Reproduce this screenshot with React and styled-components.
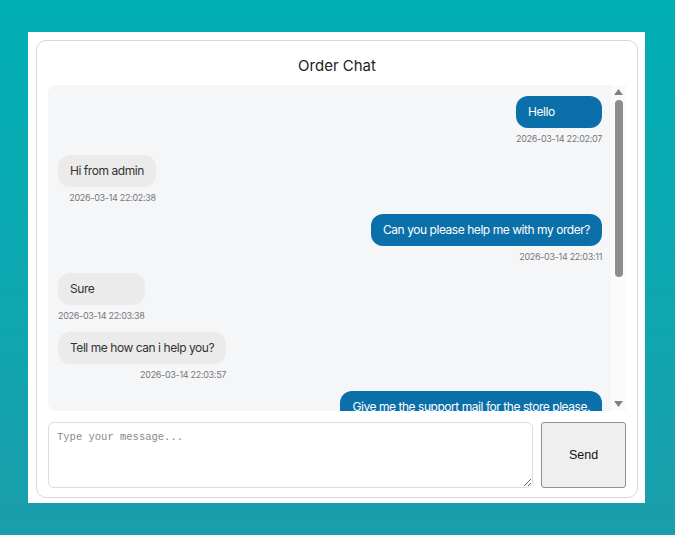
import React from 'react';
import styled, { createGlobalStyle } from 'styled-components';

const Global = createGlobalStyle`
  html, body {
    margin: 0;
    padding: 0;
  }
  body {
    min-height: 100vh;
    background: linear-gradient(180deg, #00afb4 0%, #0fa6b0 60%, #1a9eab 100%);
    font-family: 'Inter', 'Noto Sans', sans-serif;
  }
`;

const Page = styled.div`
  padding: 32px 30px 32px 28px;
`;

const Panel = styled.div`
  width: 617px;
  box-sizing: border-box;
  background: #fff;
  padding: 8px 7px 5px 8px;
`;

const Card = styled.div`
  border: 1px solid #d8d8d8;
  border-radius: 10px;
  padding: 11px 11px 9px 11px;
  display: flex;
  flex-direction: column;
`;

const Title = styled.h2`
  margin: 0;
  padding: 4px 0 9px;
  font-size: 15px;
  line-height: 20px;
  font-weight: 400;
  color: #222;
  text-align: center;
`;

const ChatArea = styled.div`
  display: flex;
  height: 326px;
`;

const Messages = styled.div`
  flex: 1;
  min-width: 0;
  overflow: hidden;
  background: #f5f6f8;
  border-radius: 8px 0 0 8px;
  padding: 11px 9px 10px 10px;
  display: flex;
  flex-direction: column;
`;

const ScrollBar = styled.div`
  width: 15px;
  background: #fafafa;
  display: flex;
  flex-direction: column;
  align-items: center;
`;

const ScrollArrow = styled.div`
  height: 14px;
  display: flex;
  align-items: center;
  justify-content: center;
  svg {
    display: block;
  }
`;

const Track = styled.div`
  flex: 1;
  width: 100%;
  display: flex;
  justify-content: center;
  padding-top: 1px;
`;

const Thumb = styled.div`
  width: 8px;
  height: 177px;
  border-radius: 4px;
  background: #8d8d8d;
`;

const Message = styled.div`
  display: inline-flex;
  flex-direction: column;
  align-items: flex-end;
  align-self: ${({ mine }) => (mine ? 'flex-end' : 'flex-start')};
  margin-bottom: 10px;
  max-width: 75%;
  flex-shrink: 0;
`;

const Bubble = styled.div`
  padding: 8px 12px;
  border-radius: 12px;
  font-size: 12px;
  line-height: 16px;
  letter-spacing: -0.45px;
  background: ${({ mine }) => (mine ? '#0b6fa9' : '#ebebeb')};
  color: ${({ mine }) => (mine ? '#fff' : '#333')};
  align-self: stretch;
`;

const Time = styled.div`
  margin-top: 5px;
  font-size: 9px;
  line-height: 12px;
  letter-spacing: -0.3px;
  color: #777;
  white-space: nowrap;
`;

const InputRow = styled.div`
  display: flex;
  gap: 8px;
  margin-top: 11px;
  height: 66px;
`;

const TextBox = styled.textarea`
  flex: 1;
  box-sizing: border-box;
  height: 66px;
  border: 1px solid #dcdcdc;
  border-radius: 6px;
  padding: 8px;
  font-family: 'Liberation Mono', monospace;
  font-size: 10.5px;
  color: #333;
  &::placeholder {
    color: #888;
  }
`;

const SendButton = styled.button`
  width: 85px;
  height: 66px;
  box-sizing: border-box;
  background: #efefef;
  border: 1px solid #8f8f8f;
  border-radius: 3px;
  font-family: 'Liberation Sans', Arial, sans-serif;
  font-size: 12.5px;
  color: #111;
`;

const messages = [
  { mine: true, text: 'Hello', time: '2026-03-14 22:02:07' },
  { mine: false, text: 'Hi from admin', time: '2026-03-14 22:02:38' },
  { mine: true, text: 'Can you please help me with my order?', time: '2026-03-14 22:03:11' },
  { mine: false, text: 'Sure', time: '2026-03-14 22:03:38' },
  { mine: false, text: 'Tell me how can i help you?', time: '2026-03-14 22:03:57' },
  { mine: true, text: 'Give me the support mail for the store please.', time: '2026-03-14 22:04:20' },
];

const Arrow = ({ up }) => (
  <svg width="9" height="6" viewBox="0 0 9 6">
    <polygon points={up ? '0,6 9,6 4.5,0' : '0,0 9,0 4.5,6'} fill="#808080" />
  </svg>
);

export default function App() {
  return (
    <>
      <Global />
      <Page>
        <Panel>
          <Card>
            <Title>Order Chat</Title>
            <ChatArea>
              <Messages>
                {messages.map((m, i) => (
                  <Message key={i} mine={m.mine}>
                    <Bubble mine={m.mine}>{m.text}</Bubble>
                    <Time>{m.time}</Time>
                  </Message>
                ))}
              </Messages>
              <ScrollBar>
                <ScrollArrow><Arrow up /></ScrollArrow>
                <Track><Thumb /></Track>
                <ScrollArrow><Arrow /></ScrollArrow>
              </ScrollBar>
            </ChatArea>
            <InputRow>
              <TextBox placeholder="Type your message..." />
              <SendButton>Send</SendButton>
            </InputRow>
          </Card>
        </Panel>
      </Page>
    </>
  );
}
